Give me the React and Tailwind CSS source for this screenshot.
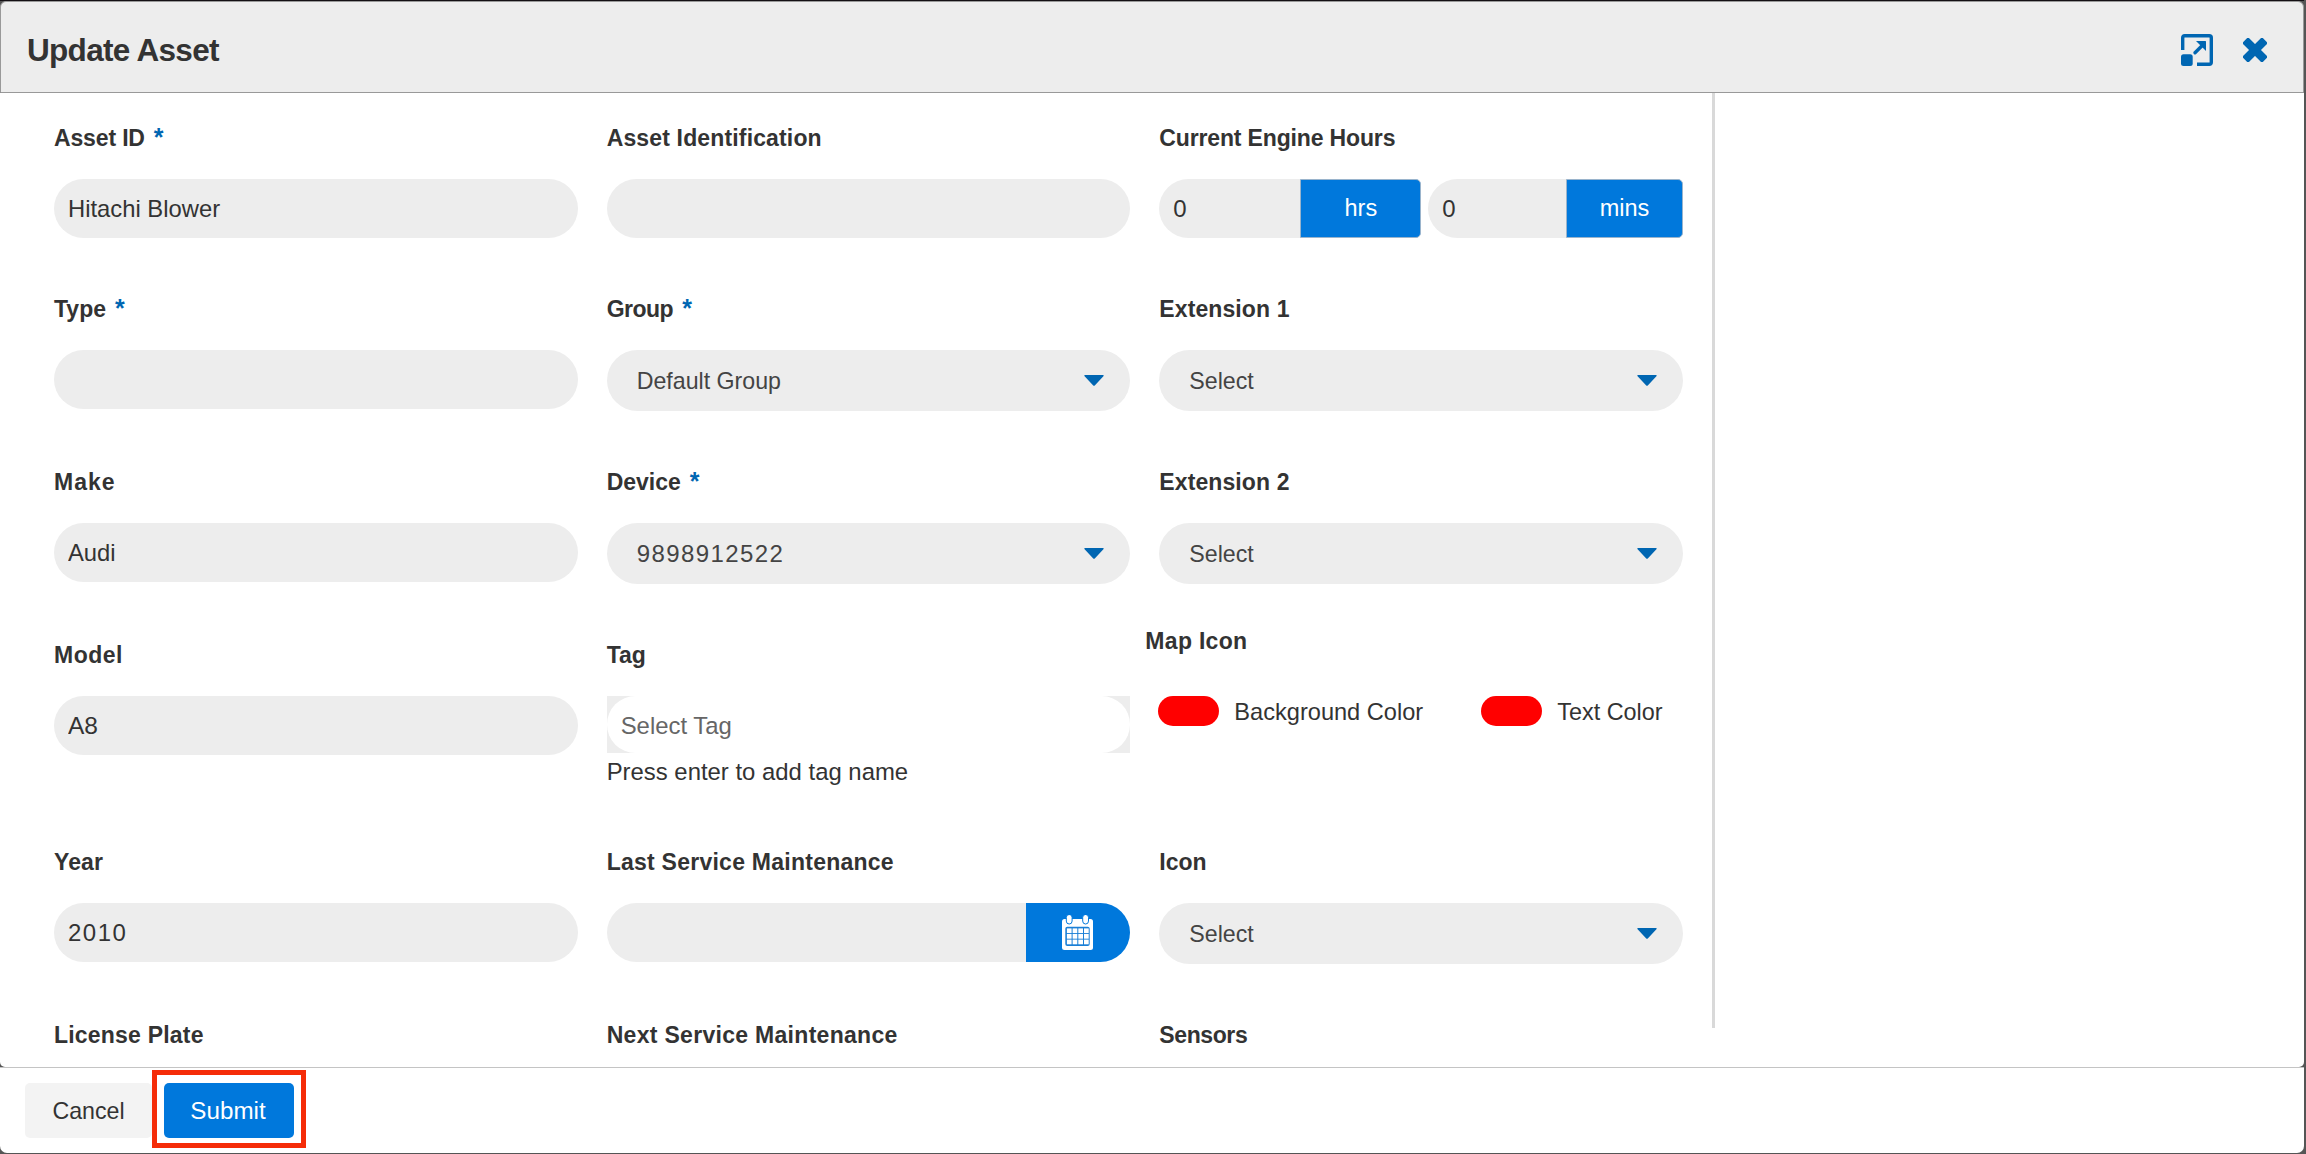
import { useState } from 'react'

const controlClass = 'w-full min-w-0 h-[59px] rounded-full bg-[#ededed] px-[14px] text-[#333] outline-none'
const addonClass = 'h-[59px] shrink-0 flex items-center justify-center bg-[#0078dc] text-white'

function Field({ label, required, labelClass = '', children }) {
  return (
    <div>
      <label className={`block h-8 mb-[25px] leading-8 text-[23px] font-bold whitespace-nowrap ${labelClass}`}>
        {label}{required && <span className="text-[#0066b2] ml-[9px] text-[25px] leading-none">*</span>}
      </label>
      {children}
    </div>
  )
}

function TextInput({ initial = '', className = 'text-[23.8px]' }) {
  const [value, setValue] = useState(initial)
  return <input type="text" value={value} onChange={e => setValue(e.target.value)} className={`${controlClass} ${className}`} />
}

function SelectBox({ value, textClass = 'text-[23.2px]' }) {
  return (
    <button type="button" className="w-full h-[61px] rounded-full bg-[#ededed] pl-[30px] pr-[26px] flex items-center justify-between text-[#444]">
      <span className={`pt-px ${textClass}`}>{value}</span>
      <svg width="20" height="11" viewBox="0 0 20 11" fill="#0066b2">
        <path d="M1 0H19Q20.4 0 19.4 1.2L11 10.3Q10 11.4 9 10.3L.6 1.2Q-.4 0 1 0Z" />
      </svg>
    </button>
  )
}

function HoursInput({ unit, className, addonWidth }) {
  return (
    <div className={`flex ${className}`}>
      <TextInput initial="0" className="rounded-r-none text-[24px]" />
      <span className={`${addonClass} ${addonWidth} rounded-r-[5px] border border-[#9ab4cc] text-[23.5px]`}>{unit}</span>
    </div>
  )
}

function Swatch({ label, textClass }) {
  return (
    <div className="flex h-[30px]">
      <span className="w-[61px] h-[30px] rounded-[15px] bg-[#ff0000]" />
      <span className={`ml-[15px] mt-px leading-[30px] whitespace-nowrap ${textClass}`}>{label}</span>
    </div>
  )
}

function ExpandIcon() {
  return (
    <svg width="32" height="32" viewBox="0 0 32 32" fill="none" stroke="#0066b2">
      <path d="M1.7 16V3.7Q1.7 1.7 3.7 1.7H28.3Q30.3 1.7 30.3 3.7V28.3Q30.3 30.3 28.3 30.3H16" strokeWidth="3.4" />
      <rect x="0" y="20.3" width="11.7" height="11.7" rx="2.5" fill="#0066b2" stroke="none" />
      <path d="M14 18.8L21.5 11.3" strokeWidth="3.4" strokeLinecap="round" />
      <path d="M15 7H24.5Q25 7 25 7.5V17Z" fill="#0066b2" stroke="none" />
    </svg>
  )
}

function CloseIcon() {
  return (
    <svg width="24" height="24" viewBox="0 0 24 24" fill="#0066b2">
      <rect x="-2" y="7.8" width="28" height="8.4" rx="1.6" transform="rotate(45 12 12)" />
      <rect x="-2" y="7.8" width="28" height="8.4" rx="1.6" transform="rotate(-45 12 12)" />
    </svg>
  )
}

function CalendarIcon() {
  return (
    <svg width="31" height="35" viewBox="0 0 31 35" className="mr-[2px]">
      <rect x="0" y="4" width="31" height="31" rx="2.5" fill="#fff" />
      <rect x="4.3" y="-.5" width="5.8" height="9.5" rx="2.9" fill="#fff" stroke="#0078dc" />
      <rect x="20.7" y="-.5" width="5.8" height="9.5" rx="2.9" fill="#fff" stroke="#0078dc" />
      <rect x="3.3" y="11.7" width="24.4" height="19.3" rx="2" fill="#1a7fd6" />
      {[4.9, 10.6, 16.3, 22].map(x => [13.4, 19, 24.6].map(y => (
        <rect key={`${x}-${y}`} x={x} y={y} width="4.7" height="4.7" fill="#fff" />
      )))}
    </svg>
  )
}

export default function App() {
  return (
    <div className="w-[2306px] h-[1154px] overflow-hidden bg-[#555] pr-[2px] pb-px font-['Liberation_Sans',Arial,sans-serif] text-[#333]">
      <div className="h-full flex flex-col border-t border-[#141014]">

        {/* Header */}
        <header className="h-[92px] shrink-0 flex items-center justify-between border border-[#999] rounded-t-[6px] bg-[#ededed] pl-[26px] pr-[36px]">
          <h2 className="text-[31.5px] font-bold tracking-[-0.7px] mt-[7px]">Update Asset</h2>
          <div className="flex items-center gap-[30px] mt-[6px]">
            <button type="button"><ExpandIcon /></button>
            <button type="button"><CloseIcon /></button>
          </div>
        </header>

        {/* Form */}
        <div className="h-[974px] shrink-0 flex overflow-hidden bg-white rounded-b-[5px]">
          <div className="w-[1715px] h-[935px] shrink-0 border-r-[3px] border-[#d9d9d9] pt-[29px] pl-[54px] pr-[29px]">
            <div className="grid grid-cols-3 gap-x-[29px] grid-rows-[171px_173px_173px_207px_48px]">
              <Field label="Asset ID" required labelClass="tracking-[-0.15px]"><TextInput initial="Hitachi Blower" /></Field>
              <Field label="Asset Identification" labelClass="tracking-[0.15px]"><TextInput /></Field>
              <Field label="Current Engine Hours" labelClass="tracking-[-0.15px]">
                <div className="flex gap-[7px]">
                  <HoursInput unit="hrs" className="w-[262px] shrink-0" addonWidth="w-[121px]" />
                  <HoursInput unit="mins" className="flex-1" addonWidth="w-[117px]" />
                </div>
              </Field>

              <Field label="Type" required><TextInput /></Field>
              <Field label="Group" required labelClass="tracking-[-0.5px]"><SelectBox value="Default Group" /></Field>
              <Field label="Extension 1" labelClass="tracking-[0.1px]"><SelectBox value="Select" /></Field>

              <Field label="Make" labelClass="tracking-[1px]"><TextInput initial="Audi" /></Field>
              <Field label="Device" required><SelectBox value="9898912522" textClass="text-[24px] tracking-[1.4px]" /></Field>
              <Field label="Extension 2" labelClass="tracking-[0.1px]"><SelectBox value="Select" /></Field>

              <Field label="Model" labelClass="tracking-[0.5px]"><TextInput initial="A8" className="text-[24.5px]" /></Field>
              <Field label="Tag">
                <div className="h-[57px] bg-[#ededed]">
                  <input placeholder="Select Tag" className="block w-full h-full rounded-full bg-white px-[14px] pt-[2px] text-[23.9px] placeholder-[#666] outline-none" />
                </div>
                <p className="text-[23.9px] leading-[38px]">Press enter to add tag name</p>
              </Field>
              <div className="-ml-[14px] -mt-[14px]">
                <div className="h-8 mb-[39px] leading-8 text-[23px] font-bold tracking-[0.3px]">Map Icon</div>
                <div className="flex pl-[13px]">
                  <div className="w-[323px]"><Swatch label="Background Color" textClass="text-[23.6px]" /></div>
                  <Swatch label="Text Color" textClass="text-[23.4px]" />
                </div>
              </div>

              <Field label="Year" labelClass="tracking-[0.1px]"><TextInput initial="2010" className="text-[24px] tracking-[1.5px]" /></Field>
              <Field label="Last Service Maintenance" labelClass="tracking-[0.25px]">
                <div className="flex">
                  <TextInput className="rounded-r-none" />
                  <button type="button" className={`${addonClass} w-[104px] rounded-r-full`}><CalendarIcon /></button>
                </div>
              </Field>
              <Field label="Icon"><SelectBox value="Select" /></Field>
            </div>

            <div className="grid grid-cols-3 gap-x-[29px] mt-[125px]">
              <Field label="License Plate" labelClass="tracking-[0.2px]" />
              <Field label="Next Service Maintenance" labelClass="tracking-[0.3px]" />
              <Field label="Sensors" labelClass="tracking-[-0.4px]" />
            </div>
          </div>
        </div>

        {/* Footer */}
        <footer className="flex-1 border-t border-[#c4c4c4] bg-white rounded-b-[7px] pl-[25px] flex items-start">
          <button type="button" className="mt-[15px] w-[127px] h-[55px] rounded-[5px] bg-[#f3f3f3] text-[23.2px] pt-[2px]">Cancel</button>
          <div className="mt-[2px] w-[154px] h-[78px] border-[5px] border-[#f52c08] bg-white flex items-start pl-[7px]">
            <button type="button" className="mt-[8px] w-[130px] h-[55px] rounded-[5px] bg-[#0078dc] text-[24.2px] text-white pt-[2px] pr-[2px]">Submit</button>
          </div>
        </footer>
      </div>
    </div>
  )
}
